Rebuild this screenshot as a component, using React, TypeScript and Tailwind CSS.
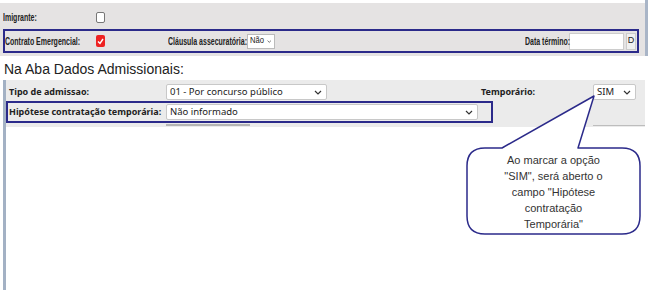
import React from "react";

const Chev = ({ className = "" }: { className?: string }) => (
  <svg width="8" height="5" viewBox="0 0 8 5" className={className}>
    <path d="M1 1 L4 4 L7 1" fill="none" stroke="#333" strokeWidth="1.2" />
  </svg>
);

const Narrow = ({ children, w, className = "" }: { children: React.ReactNode; w: string; className?: string }) => (
  <span className={`${w} shrink-0 whitespace-nowrap overflow-visible ${className}`}>
    <span className="inline-block origin-left scale-x-[0.7] whitespace-nowrap">{children}</span>
  </span>
);

export default function App() {
  const top = "font-['Liberation_Sans',sans-serif]";
  const noto = "font-['Noto_Sans',sans-serif]";
  return (
    <div className="relative w-[653px] h-[308px] bg-white overflow-hidden">
      {/* Section 1 */}
      <div className="w-[648px] h-[56px] pt-[3px] bg-white border-r-[3px] border-[#a9b5c7]">
        <div className={`h-full bg-[#e5e3e3] ${top} text-[10px] font-bold text-[#222]`}>
          <div className="h-[26px] flex items-center pl-[3px] pt-[3px]">
            <Narrow w="w-[93px]">Imigrante:</Narrow>
            <span className="w-[9px] h-[11px] bg-white border border-[#777] rounded-[2px]" />
          </div>
          <div className="ml-[3px] w-[636px] h-[24px] border-2 border-[#2b2a8a] flex items-center">
            <Narrow w="w-[91px]">Contrato Emergencial:</Narrow>
            <span className="w-[9px] h-[12px] bg-[#ee2222] rounded-[2px] flex items-center justify-center">
              <svg width="7" height="7" viewBox="0 0 7 7">
                <path d="M1 3.5 L3 5.5 L6 1" fill="none" stroke="white" strokeWidth="1.4" />
              </svg>
            </span>
            <span className="w-[63px] shrink-0" />
            <Narrow w="w-[79px]">Cláusula assecuratória:</Narrow>
            <span className="w-[28px] h-[15px] bg-white border border-[#bbb] flex items-center justify-between pl-[2px] pr-[3px] font-normal text-[9px]">
              <span className="inline-block origin-left scale-x-[0.85]">Não</span>
              <Chev />
            </span>
            <span className="ml-auto" />
            <Narrow w="w-[44px]">Data término:</Narrow>
            <span className="w-[55px] h-[17px] bg-white border border-[#ccc]" />
            <span className="ml-[2px] mr-[1px] w-[10px] h-[17px] bg-[#f0f0f0] border border-[#ccc] flex items-center justify-center font-normal text-[9px]">
              D
            </span>
          </div>
        </div>
      </div>

      {/* Heading */}
      <div className="h-[24px] pl-[4px] pt-[5px] font-['Liberation_Sans',sans-serif] text-[14px] leading-[16px] text-[#222]">
        Na Aba Dados Admissionais:
      </div>

      {/* Section 2 */}
      <div className={`ml-[3px] w-[642px] h-[210px] border-l-[3px] border-[#a3b1c4] ${noto} text-[9.5px] text-[#222]`}>
        <div className="bg-[#ebebeb] h-[47px] pt-[3px]">
          <div className="h-[18px] flex items-center">
            <span className="w-[160px] pl-[3px] font-bold text-[9px]">Tipo de admissao:</span>
            <span className="w-[161px] h-[16px] bg-white border border-[#c8c8c8] rounded-[2px] flex items-center justify-between pl-[3px] pr-[4px]">
              01 - Por concurso público
              <Chev />
            </span>
            <span className="ml-[154px] font-bold text-[9px]">Temporário:</span>
            <span className="ml-auto mr-[9px] w-[43px] h-[16px] bg-white border border-[#c8c8c8] rounded-[2px] flex items-center justify-between pl-[3px] pr-[4px]">
              SIM
              <Chev />
            </span>
          </div>
          <div className="flex">
            <div className="w-[487px] h-[22px] border-2 border-[#2b2a8a] flex items-center">
              <span className="w-[158px] pl-[1px] font-bold text-[9px] whitespace-nowrap">Hipótese contratação temporária:</span>
              <span className="w-[312px] h-[16px] bg-white border border-[#c8c8c8] rounded-[2px] flex items-center justify-between pl-[3px] pr-[4px]">
                Não informado
                <Chev />
              </span>
            </div>
          </div>
          <div className="flex h-[4px] items-start">
            <span className="ml-[160px] mt-[1px] w-[84px] h-[2px] bg-[#b5b5b5]" />
            <span className="ml-auto mt-[2px] w-[52px] h-[1px] bg-[#bdbdbd]" />
          </div>
        </div>
      </div>

      {/* Callout */}
      <svg className="absolute left-0 top-0 pointer-events-none" width="653" height="308">
        <path
          d="M502 148 L594 96 L578 148 L622 148 Q640 148 640 166 L640 216 Q640 234 622 234 L485 234 Q467 234 467 216 L467 166 Q467 148 485 148 Z"
          fill="white"
          stroke="#2b2a8a"
          strokeWidth="1.5"
          strokeLinejoin="round"
        />
      </svg>
      <div className="absolute left-[467px] top-[152px] w-[173px] text-center font-['Liberation_Sans',sans-serif] text-[11px] leading-[16px] text-[#333]">
        Ao marcar a opção
        <br />
        "SIM", será aberto o
        <br />
        campo "Hipótese
        <br />
        contratação
        <br />
        Temporária"
      </div>
    </div>
  );
}
